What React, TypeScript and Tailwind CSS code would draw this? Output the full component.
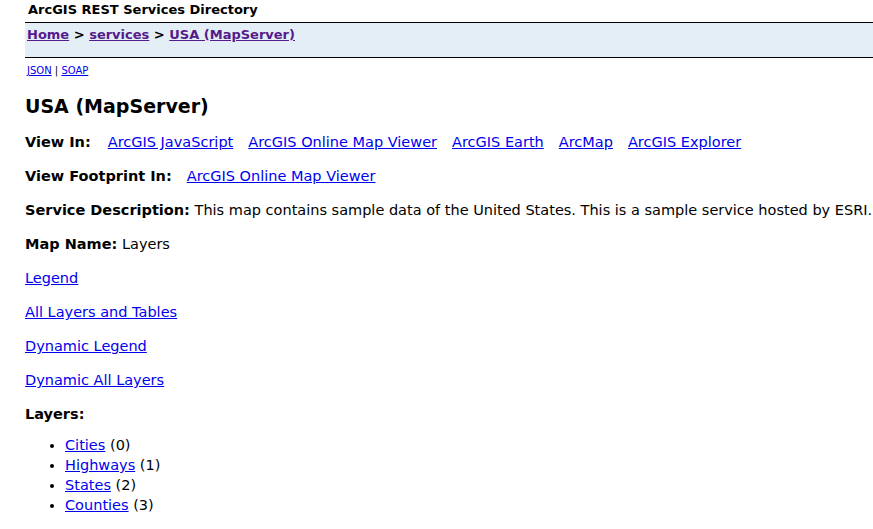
const links = ['ArcGIS JavaScript', 'ArcGIS Online Map Viewer', 'ArcGIS Earth', 'ArcMap', 'ArcGIS Explorer']
const layers = [
  { name: 'Cities', id: 0 },
  { name: 'Highways', id: 1 },
  { name: 'States', id: 2 },
  { name: 'Counties', id: 3 },
]

function A({ children, visited }: { children: React.ReactNode; visited?: boolean }) {
  return (
    <a href="#" className={`underline ${visited ? 'text-[#551a8b]' : 'text-[#0000ee]'}`}>
      {children}
    </a>
  )
}

export default function App() {
  return (
    <div className="min-h-[529px] bg-white text-black font-['DejaVu_Sans',Verdana,sans-serif] text-[13px] leading-[16px] overflow-hidden">
      <div className="pl-[28px] pt-[2px] h-[22px] font-bold">ArcGIS REST Services Directory</div>
      <div className="ml-[25px] border-t border-b border-black bg-[#e4eef7] h-[36px] pl-[2px] pt-[4px] font-bold">
        <A visited>Home</A> &gt; <A visited>services</A> &gt; <A visited>USA (MapServer)</A>
      </div>
      <div className="pl-[27px] pt-[7px] text-[10px] leading-[12px]">
        <A>JSON</A> | <A>SOAP</A>
      </div>
      <div className="pl-[25px] text-[14.5px] leading-[17px]">
        <h2 className="text-[19px] leading-[22px] font-bold mt-[18px] mb-[17px]">USA (MapServer)</h2>
        <div className="flex flex-col gap-[17px]">
          <div>
            <b className="mr-[2px]">View In:</b>
            {links.map((l) => (
              <span key={l} className="ml-[15px]">
                <A>{l}</A>
              </span>
            ))}
          </div>
          <div>
            <b>View Footprint In:</b>
            <span className="ml-[15px]">
              <A>ArcGIS Online Map Viewer</A>
            </span>
          </div>
          <div className="whitespace-nowrap">
            <b>Service Description:</b> This map contains sample data of the United States. This is a sample service hosted by ESRI.
          </div>
          <div>
            <b>Map Name:</b> Layers
          </div>
          <div><A>Legend</A></div>
          <div><A>All Layers and Tables</A></div>
          <div><A>Dynamic Legend</A></div>
          <div><A>Dynamic All Layers</A></div>
          <div><b>Layers:</b></div>
        </div>
        <ul className="list-disc pl-[40px] mt-[12px] leading-[20px]">
          {layers.map((l) => (
            <li key={l.id}>
              <A>{l.name}</A> ({l.id})
            </li>
          ))}
        </ul>
      </div>
    </div>
  )
}
